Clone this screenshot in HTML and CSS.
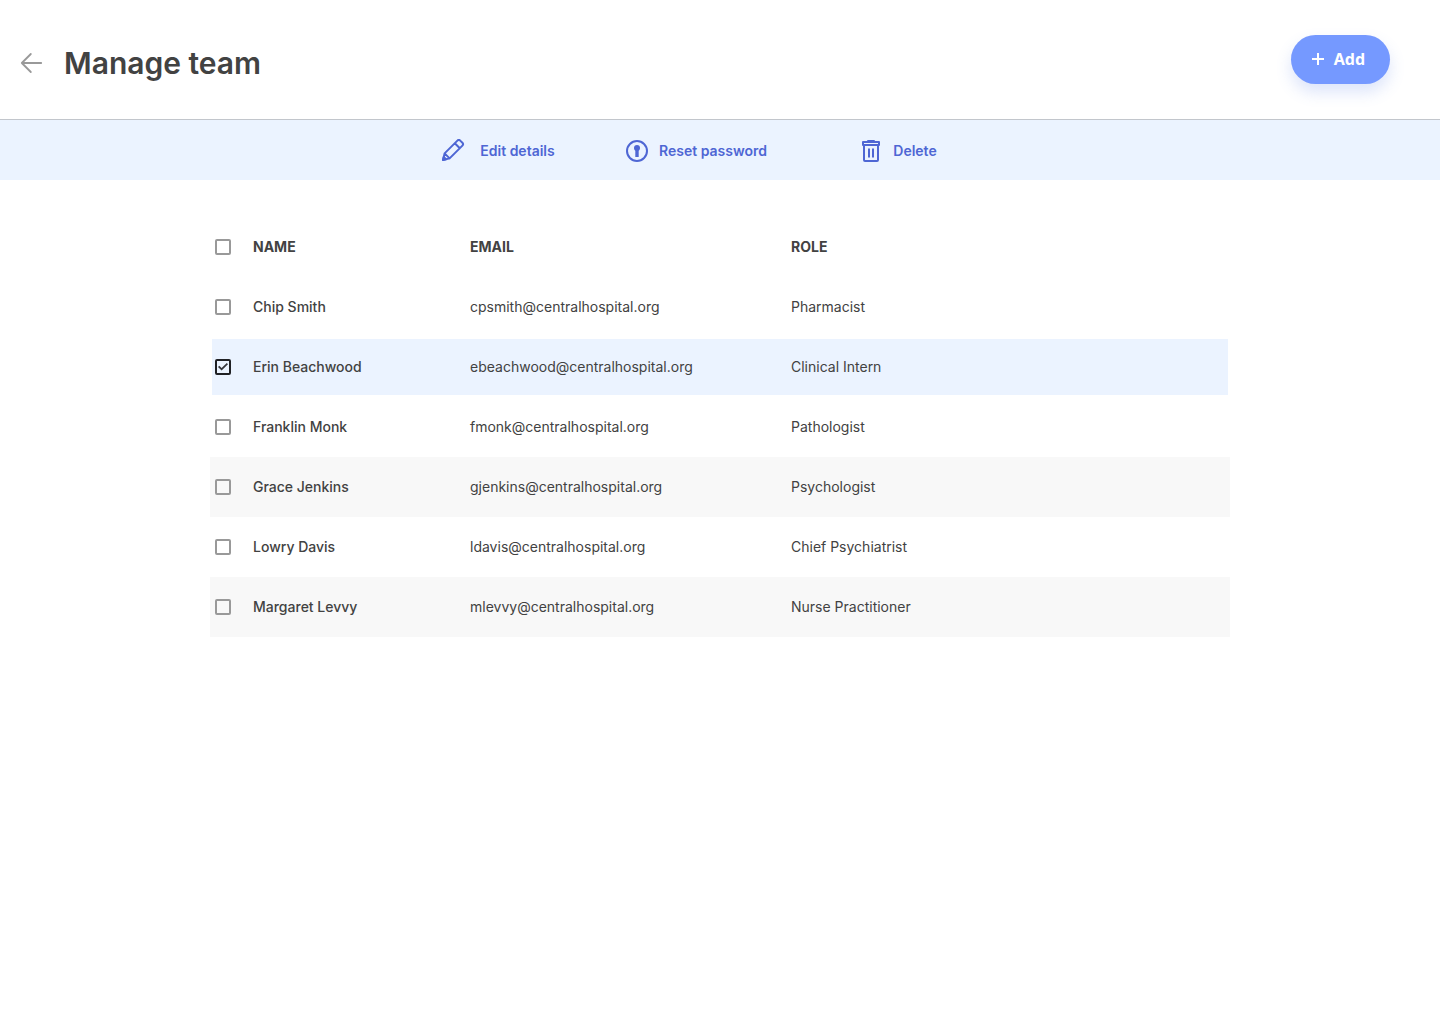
FILE: index.html
```html
<!DOCTYPE html>
<html lang="en">
<head>
<meta charset="utf-8">
<meta name="viewport" content="width=device-width, initial-scale=1">
<title>Manage team</title>
<link rel="stylesheet" href="styles.css">
</head>
<body>
<header class="page-header">
  <a class="back" href="#" aria-label="Back">
    <svg width="24" height="24" viewBox="0 0 24 24" fill="none" stroke="currentColor" stroke-width="1.800" stroke-linecap="round" stroke-linejoin="round"><path d="M22.200 12H2.800M11.800 3L2.800 12l9 9"/></svg>
  </a>
  <h1 class="title">Manage team</h1>
  <button class="add" type="button">
    <svg width="12" height="12" viewBox="0 0 12 12" fill="none" stroke="currentColor" stroke-width="2"><path d="M6 0v12M0 6h12"/></svg>
    Add
  </button>
</header>
<div class="toolbar" role="toolbar" aria-label="Member actions">
  <button class="action action-edit" type="button">
    <svg width="24" height="24" viewBox="0 0 24 24" fill="none" stroke="currentColor" stroke-width="2" stroke-linejoin="round" stroke-linecap="round"><path d="M2 21l1.600-6.600L16.400 1.600a2 2 0 0 1 2.800 0l2.200 2.200a2 2 0 0 1 0 2.800L8.600 19.400zM13.800 4.200l5 5M3.600 14.400l5 5"/><path d="M2 21l.7-3 2.300 2.300z" fill="currentColor"/></svg>
    Edit details
  </button>
  <button class="action action-reset" type="button">
    <svg width="24" height="24" viewBox="0 0 24 24"><circle cx="12" cy="12" r="10" fill="none" stroke="currentColor" stroke-width="2"/><circle cx="12" cy="9" r="3" fill="currentColor"/><path d="M10.300 9h3.400v9h-3.400z" fill="currentColor"/></svg>
    Reset password
  </button>
  <button class="action" type="button">
    <svg width="24" height="24" viewBox="0 0 24 24" fill="none" stroke="currentColor" stroke-width="2" stroke-linejoin="round"><path d="M8.500 3l.5-1h6l.5 1M4 3h16v3H4zM5 6v15a1 1 0 0 0 1 1h12a1 1 0 0 0 1-1V6M10 9.500v9M14 9.500v9"/></svg>
    Delete
  </button>
</div>
<main class="content">
  <table class="team">
    <thead>
      <tr><th class="pick"><input class="check" type="checkbox" aria-label="Select all"></th><th class="name">NAME</th><th class="email">EMAIL</th><th>ROLE</th></tr>
    </thead>
    <tbody>
      <tr><td class="pick"><input class="check" type="checkbox" id="m1"></td><td class="name"><label for="m1">Chip Smith</label></td><td>cpsmith@centralhospital.org</td><td>Pharmacist</td></tr>
      <tr class="selected"><td class="pick"><input class="check" type="checkbox" id="m2" checked></td><td class="name"><label for="m2">Erin Beachwood</label></td><td>ebeachwood@centralhospital.org</td><td>Clinical Intern</td></tr>
      <tr><td class="pick"><input class="check" type="checkbox" id="m3"></td><td class="name"><label for="m3">Franklin Monk</label></td><td>fmonk@centralhospital.org</td><td>Pathologist</td></tr>
      <tr class="shaded"><td class="pick"><input class="check" type="checkbox" id="m4"></td><td class="name"><label for="m4">Grace Jenkins</label></td><td>gjenkins@centralhospital.org</td><td>Psychologist</td></tr>
      <tr><td class="pick"><input class="check" type="checkbox" id="m5"></td><td class="name"><label for="m5">Lowry Davis</label></td><td>ldavis@centralhospital.org</td><td>Chief Psychiatrist</td></tr>
      <tr class="shaded"><td class="pick"><input class="check" type="checkbox" id="m6"></td><td class="name"><label for="m6">Margaret Levvy</label></td><td>mlevvy@centralhospital.org</td><td>Nurse Practitioner</td></tr>
    </tbody>
  </table>
</main>
</body>
</html>
```
FILE: styles.css
```css
* { box-sizing: border-box; }

body {
  margin: 0;
  background: #fff;
  color: #424242;
  font: 14px/20px Inter, sans-serif;
}

svg { display: block; flex: none; }

button {
  border: 0;
  background: none;
  font-family: inherit;
  cursor: pointer;
}

.page-header {
  display: flex;
  align-items: center;
  min-height: 120px;
  padding: 0 50px 0 19px;
  border-bottom: 1px solid #c2c6cc;
}

.back {
  margin-top: 7px;
  color: #999;
}

.title {
  margin: 6px auto 0 21px;
  font-size: 30px;
  line-height: 40px;
  font-weight: 600;
}

.add {
  display: flex;
  align-items: center;
  gap: 10px;
  height: 49px;
  padding: 0 25px 1px 21px;
  border-radius: 25px;
  background: #7599ff;
  box-shadow: 0 8px 16px rgba(80, 120, 230, 0.2);
  color: #fff;
  font: 700 16px/24px "Noto Sans", sans-serif;
}

.toolbar {
  display: grid;
  grid-template-columns: repeat(3, 200px);
  justify-content: center;
  min-height: 60px;
  padding-right: 44px;
  background: #ebf3ff;
}

.action {
  display: flex;
  align-items: center;
  justify-content: center;
  gap: 10px;
  padding: 2px 0 0;
  color: #4e66d4;
  font-size: 14px;
  line-height: 20px;
  font-weight: 600;
}

.action-edit { gap: 15px; }
.action-reset { padding-right: 4px; }

.content {
  max-width: 1020px;
  margin: 37px auto;
}

.team {
  width: 100%;
  table-layout: fixed;
  border-collapse: collapse;
}

.team th,
.team td {
  height: 60px;
  padding: 0;
  text-align: left;
  vertical-align: middle;
}

.team th { font-weight: 700; }
.team .pick { width: 43px; padding-left: 5px; }
.team .name { width: 217px; }
.team .email { width: 321px; }
.team td.name { font-weight: 500; }

.shaded { background: #f8f8f8; }

.selected {
  background: #ebf3ff;
  outline: 2px solid #fff;
  outline-offset: -2px;
}

.check {
  appearance: none;
  display: grid;
  place-items: center;
  width: 16px;
  height: 16px;
  margin: 0;
  border: 2px solid #999;
  border-radius: 2px;
}

.check:checked { border-color: #1f2024; }

.check:checked::before {
  content: "";
  width: 10px;
  height: 8px;
  background: #35363b;
  clip-path: polygon(0 50%, 13% 34%, 36% 64%, 88% 0, 100% 15%, 36% 94%);
}
```
